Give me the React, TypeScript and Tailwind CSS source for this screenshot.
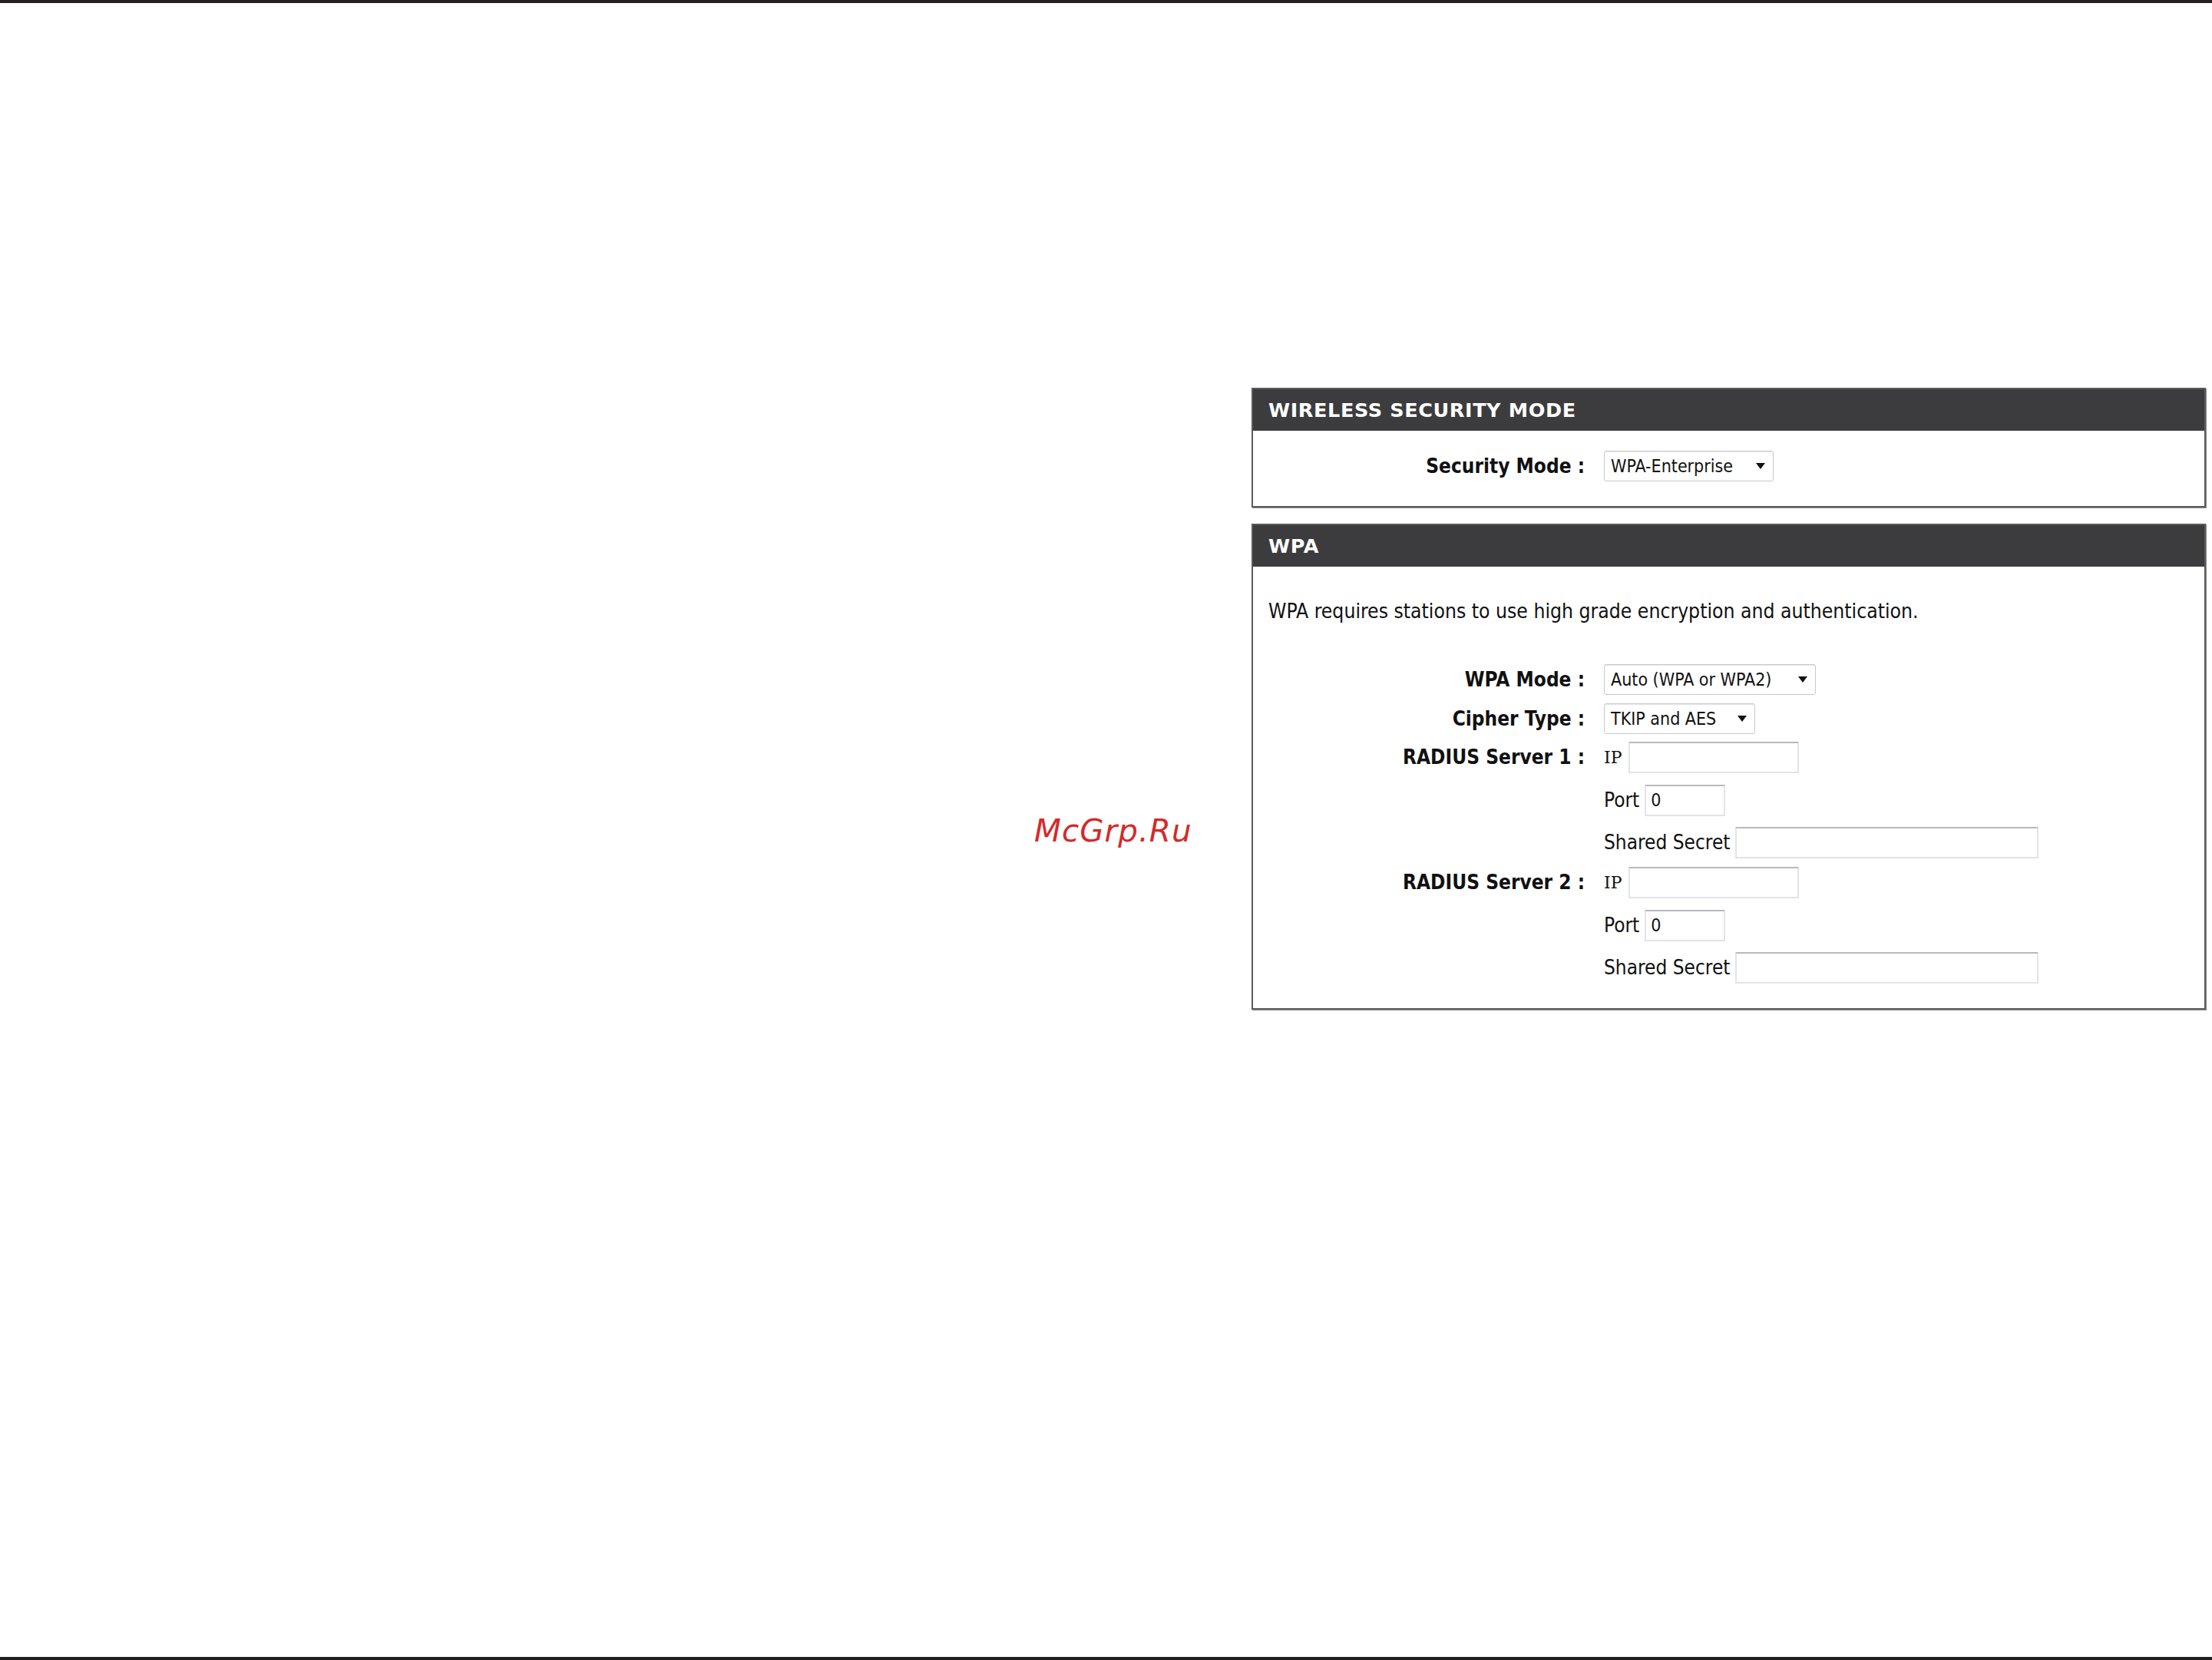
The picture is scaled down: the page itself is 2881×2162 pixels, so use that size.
import React from 'react';

const formFont = "font-['DejaVu_Sans_Condensed','DejaVu_Sans',sans-serif]";

const SelectBox = ({ value, width }: { value: string; width: string }) => (
  <div
    className={`${width} h-[40px] flex items-center justify-between pl-[8px] pr-[10px] bg-white border border-[#c9c9cc] rounded-[3px] shadow-[inset_0_1px_0_#e6e6e6] text-[23px] text-[#111]`}
  >
    <span>{value}</span>
    <span className="w-0 h-0 border-l-[6px] border-r-[6px] border-t-[8px] border-l-transparent border-r-transparent border-t-[#111]" />
  </div>
);

const TextBox = ({ width, value = '' }: { width: string; value?: string }) => (
  <div
    className={`${width} h-[41px] flex items-center px-[6px] bg-white border-2 border-[#e3e4e8] border-t-[#b9b9bd] text-[23px] text-[#111]`}
  >
    {value}
  </div>
);

const Label = ({ children }: { children: React.ReactNode }) => (
  <div className="w-[412px] shrink-0 text-right font-bold text-[26px] text-[#111] leading-[40px]">{children}</div>
);

const Panel = ({ title, children }: { title: string; children: React.ReactNode }) => (
  <div className="w-[1243px] border-2 border-[#5c5c5c] shadow-[1px_1px_0_#8a8a8a] bg-white">
    <div className="h-[54px] bg-[#3c3c3e] flex items-center pl-[20px] font-['DejaVu_Sans',sans-serif] font-bold text-[25.5px] tracking-[0.6px] text-white">
      {title}
    </div>
    {children}
  </div>
);

const RadiusServer = ({ n, first }: { n: number; first?: boolean }) => (
  <>
    <div className={`flex gap-[25px] ${first ? 'mt-[10px]' : 'mt-[11px]'}`}>
      <Label>RADIUS Server {n} :</Label>
      <div className="flex items-center gap-[8px] text-[26px]">
        <span className="w-[24px] font-['DejaVu_Serif',serif] text-[22px]">IP</span>
        <TextBox width="w-[222px]" />
      </div>
    </div>
    <div className="flex gap-[25px] mt-[15px]">
      <div className="w-[412px] shrink-0" />
      <div className="flex items-center gap-[7px] text-[26px]">
        <span>Port</span>
        <TextBox width="w-[105px]" value="0" />
      </div>
    </div>
    <div className="flex gap-[25px] mt-[14px]">
      <div className="w-[412px] shrink-0" />
      <div className="flex items-center gap-[7px] text-[26px]">
        <span>Shared Secret</span>
        <TextBox width="w-[395px]" />
      </div>
    </div>
  </>
);

export default function App() {
  return (
    <div className="relative w-full h-[2162px] bg-white flex flex-col">
      <div className="h-[4px] bg-[#231f20]" />
      <div className={`flex-1 flex flex-col items-end pr-[8px] pt-[501px] gap-[21px] ${formFont} text-[#111]`}>
        <Panel title="WIRELESS SECURITY MODE">
          <div className="flex items-center gap-[25px] pl-[20px] pt-[26px] pb-[32px]">
            <Label>Security Mode :</Label>
            <SelectBox value="WPA-Enterprise" width="w-[221px]" />
          </div>
        </Panel>
        <Panel title="WPA">
          <div className="pl-[20px] pt-[43px] pb-[32px]">
            <p className="text-[26.3px] leading-[30px]">
              WPA requires stations to use high grade encryption and authentication.
            </p>
            <div className="flex items-center gap-[25px] mt-[54px]">
              <Label>WPA Mode :</Label>
              <SelectBox value="Auto (WPA or WPA2)" width="w-[276px]" />
            </div>
            <div className="flex items-center gap-[25px] mt-[11px]">
              <Label>Cipher Type :</Label>
              <SelectBox value="TKIP and AES" width="w-[197px]" />
            </div>
            <RadiusServer n={1} first />
            <RadiusServer n={2} />
          </div>
        </Panel>
      </div>
      <div className="h-[4px] bg-[#231f20]" />
      <div className="absolute left-[1347px] top-[1052px] font-['DejaVu_Sans',sans-serif] italic text-[40.5px] tracking-[1px] text-[#d42a2a]">
        McGrp.Ru
      </div>
    </div>
  );
}
